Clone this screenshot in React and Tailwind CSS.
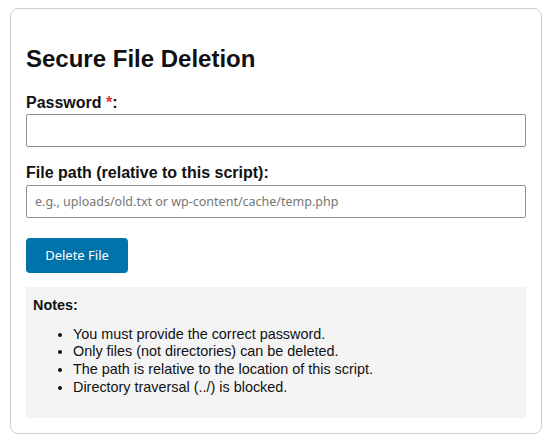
export default function App() {
  const sans = { fontFamily: '"Liberation Sans", Arial, sans-serif' };
  return (
    <div className="min-h-[439px] w-[547px] bg-white pt-[8px] pl-[10px]" style={sans}>
      <div className="w-[532px] rounded-[8px] border border-[#cfcfcf] bg-white px-[15px] pt-[15px] pb-[15px] text-[#111]">
        <h2 className="mt-[21px] text-[24px] leading-[28px] font-bold">Secure File Deletion</h2>

        <label className="mt-[21px] block text-[16px] leading-[18px] font-bold">
          Password <span className="text-[#d63638]">*</span>:
        </label>
        <input
          type="password"
          className="mt-[2px] block h-[33px] w-[500px] rounded-[2px] border border-[#8f8f8f] bg-white px-[8px] outline-none"
        />

        <label className="mt-[17px] block text-[16px] leading-[18px] font-bold">
          File path (relative to this script):
        </label>
        <input
          type="text"
          placeholder="e.g., uploads/old.txt or wp-content/cache/temp.php"
          className="mt-[3px] block h-[33px] w-[500px] rounded-[2px] border border-[#8f8f8f] bg-white px-[8px] text-[12.5px] outline-none placeholder:text-[#767676]"
          style={{ fontFamily: '"Noto Sans", "Open Sans", sans-serif' }}
        />

        <button
          className="mt-[20px] flex h-[35px] w-[102px] items-center justify-center rounded-[4px] bg-[#0073aa] text-[13px] text-white"
          style={{ fontFamily: '"Noto Sans", "Open Sans", sans-serif' }}
        >
          Delete File
        </button>

        <div className="mt-[14px] h-[131px] bg-[#f4f4f4] px-[7px] pt-[10px]">
          <div className="text-[14.4px] leading-[17.6px] font-bold">Notes:</div>
          <ul className="mt-[11px] list-disc pl-[40px] text-[14.4px] leading-[17.7px]">
            <li>You must provide the correct password.</li>
            <li>Only files (not directories) can be deleted.</li>
            <li>The path is relative to the location of this script.</li>
            <li>Directory traversal (../) is blocked.</li>
          </ul>
        </div>
      </div>
    </div>
  );
}
